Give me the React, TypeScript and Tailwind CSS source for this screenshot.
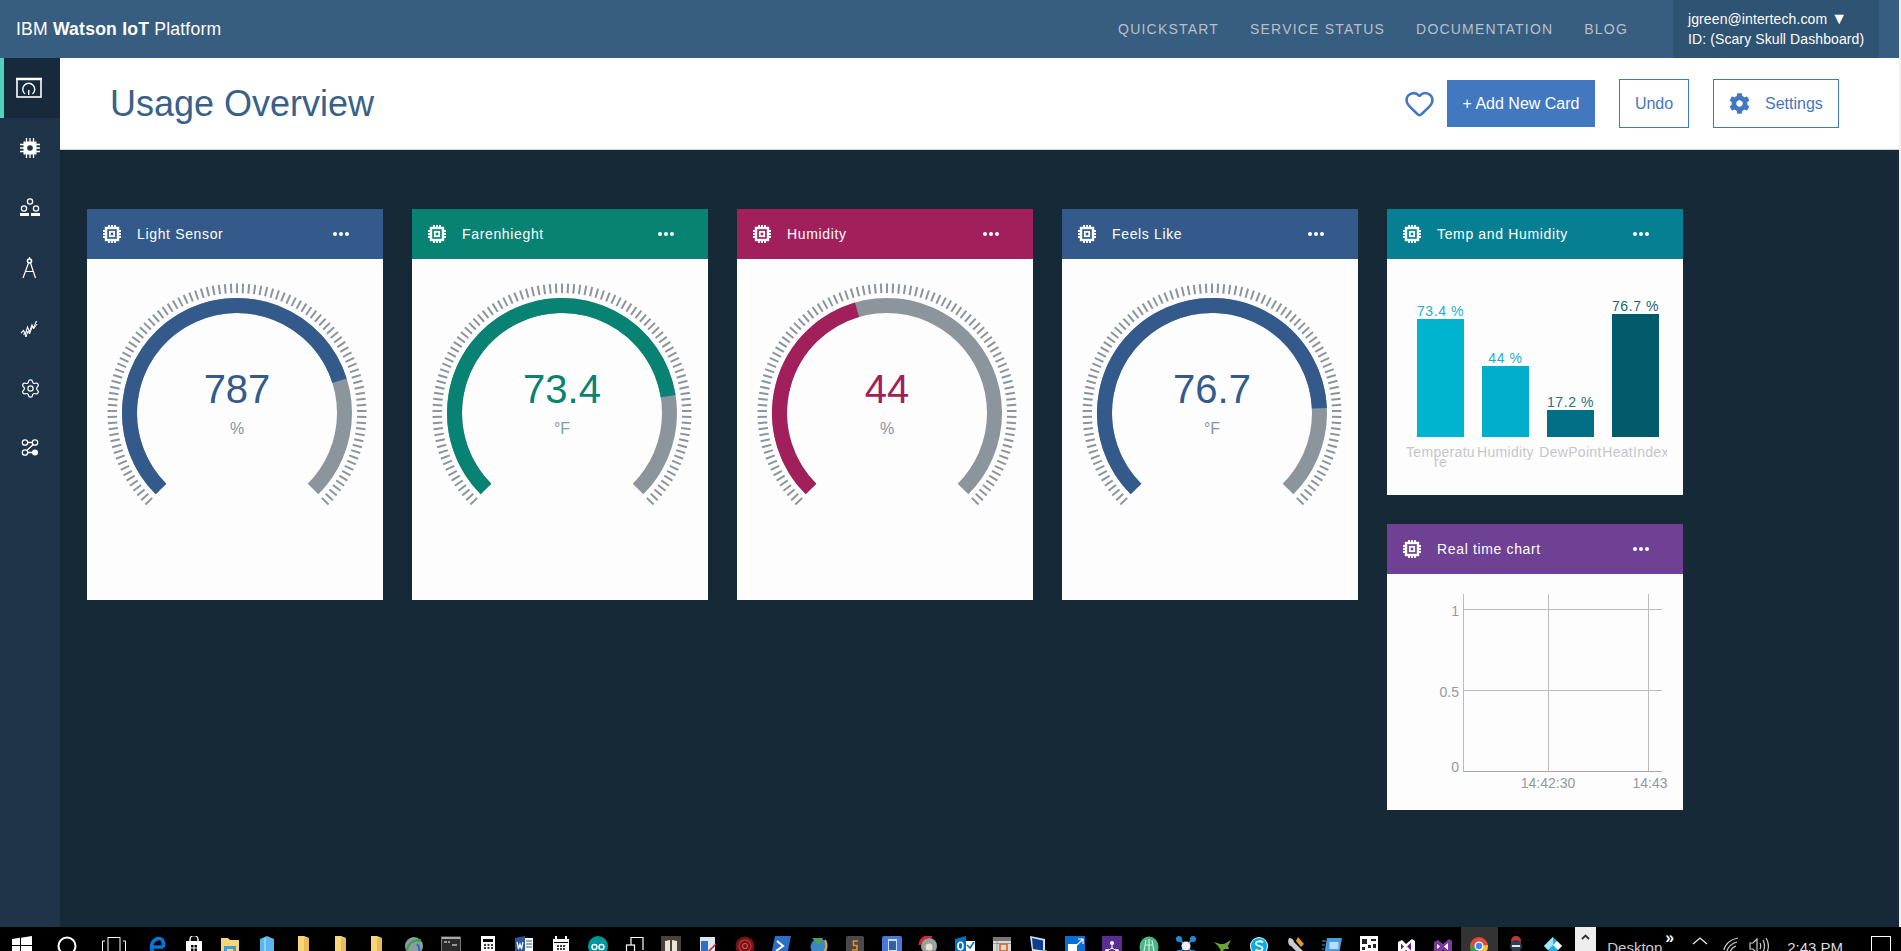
import React from "react";
import { Heart, Settings as Gear } from "lucide-react";
import { FaCog } from "react-icons/fa";

const polar = (cx: number, cy: number, r: number, deg: number) => {
  const a = (deg * Math.PI) / 180;
  return [cx + r * Math.sin(a), cy - r * Math.cos(a)];
};
const arc = (cx: number, cy: number, r: number, a: number, b: number) => {
  const [x1, y1] = polar(cx, cy, r, a);
  const [x2, y2] = polar(cx, cy, r, b);
  return `M${x1} ${y1}A${r} ${r} 0 ${b - a > 180 ? 1 : 0} 1 ${x2} ${y2}`;
};

function Chip() {
  return (
    <svg width="18" height="18" viewBox="0 0 18 18" fill="none" stroke="#fff" className="shrink-0">
      <rect x="3" y="3" width="12" height="12" strokeWidth="2.4" />
      <rect x="6.8" y="6.8" width="4.4" height="4.4" strokeWidth="1.8" />
      <path d="M6 0v2M9 0v2M12 0v2M6 16v2M9 16v2M12 16v2M0 6h2M0 9h2M0 12h2M16 6h2M16 9h2M16 12h2" strokeWidth="1.8" />
    </svg>
  );
}

function Dots() {
  return (
    <div className="ml-auto mr-[34px] flex gap-[1.5px]">
      <span className="h-[4.5px] w-[4.5px] rounded-full bg-white" />
      <span className="h-[4.5px] w-[4.5px] rounded-full bg-white" />
      <span className="h-[4.5px] w-[4.5px] rounded-full bg-white" />
    </div>
  );
}

function CardHead({ title, bg }: { title: string; bg: string }) {
  return (
    <div className={`flex h-[50px] items-center pl-4 text-[14px] tracking-[0.65px] text-white ${bg}`}>
      <Chip />
      <span className="ml-4">{title}</span>
      <Dots />
    </div>
  );
}

function Gauge({ title, bg, color, value, unit, frac, unitColor }: { title: string; bg: string; color: string; value: string; unit: string; frac: number; unitColor: string }) {
  const ticks = Array.from({ length: 101 }, (_, i) => -135 + i * 2.7);
  const cx = 150;
  const cy = 154;
  return (
    <div className="h-[391px] w-[296px] shrink-0 bg-[#fdfdfd]">
      <CardHead title={title} bg={bg} />
      <svg width="296" height="341" viewBox="0 0 296 341" className="block">
        {ticks.map((t) => {
          const [x1, y1] = polar(cx, cy, 120, t);
          const [x2, y2] = polar(cx, cy, 129.5, t);
          return <line key={t} x1={x1} y1={y1} x2={x2} y2={y2} stroke="#8c959c" strokeWidth="2" />;
        })}
        <path d={arc(cx, cy, 107.5, -135, 135)} fill="none" stroke="#8c959c" strokeWidth="15" />
        <path d={arc(cx, cy, 107.5, -135, -135 + 270 * frac)} fill="none" stroke={color} strokeWidth="15" />
        <text x={cx} y="144" textAnchor="middle" fontSize="40" fill={color}>{value}</text>
        <text x={cx} y="175" textAnchor="middle" fontSize="16" fill={unitColor}>{unit}</text>
      </svg>
    </div>
  );
}

function BarChart() {
  const bars = [
    { x: 30, top: 60, w: 47, fill: "#00b4d0", label: "73.4 %", base: 57, tc: "#1cb0cc" },
    { x: 95, top: 107, w: 47, fill: "#00aecb", label: "44 %", base: 104, tc: "#1cb0cc" },
    { x: 160, top: 151, w: 47, fill: "#006f85", label: "17.2 %", base: 148, tc: "#2a7085" },
    { x: 225, top: 55, w: 47, fill: "#005a6a", label: "76.7 %", base: 52, tc: "#1d6478" },
  ];
  return (
    <svg width="296" height="236" viewBox="0 0 296 236" className="block">
      <defs>
        <clipPath id="bc"><rect x="0" y="0" width="280" height="236" /></clipPath>
      </defs>
      {bars.map((b) => (
        <g key={b.label}>
          <rect x={b.x} y={b.top} width={b.w} height={178 - b.top} fill={b.fill} />
          <text x={b.x + 23.5} y={b.base} textAnchor="middle" fontSize="14" letterSpacing="0.6" fill={b.tc}>{b.label}</text>
        </g>
      ))}
      <g fontSize="14" fill="#c6c6c8" textAnchor="middle" clipPath="url(#bc)" letterSpacing="0.3">
        <text x="53.5" y="198">Temperatu</text>
        <text x="53.5" y="208">re</text>
        <text x="118.5" y="198">Humidity</text>
        <text x="183.5" y="198">DewPoint</text>
        <text x="248.5" y="198">HeatIndex</text>
      </g>
    </svg>
  );
}

function LineChart() {
  return (
    <svg width="296" height="236" viewBox="0 0 296 236" className="block">
      <g stroke="#b9bdc0" strokeWidth="1">
        <path d="M76.5 20V197M161.5 20V197M261.5 20V197M76 35.5H275M76 116.5H275" fill="none" />
        <path d="M76 197.5H275" stroke="#a3a7aa" />
      </g>
      <g fontSize="14" fill="#92999f">
        <text x="72" y="42" textAnchor="end">1</text>
        <text x="72" y="123" textAnchor="end">0.5</text>
        <text x="72" y="198" textAnchor="end">0</text>
        <text x="161" y="214" textAnchor="middle">14:42:30</text>
        <text x="263" y="214" textAnchor="middle">14:43</text>
      </g>
    </svg>
  );
}

function SideIcon({ i }: { i: number }) {
  const s = { width: 30, height: 30, viewBox: "0 0 30 30", fill: "none", stroke: "#fff" } as const;
  if (i === 0)
    return (
      <svg {...s} className="-ml-[2px]">
        <rect x="1" y="6" width="24" height="18" strokeWidth="1.6" />
        <path d="M0 6h26" strokeWidth="2.5" />
        <path d="M9 21a6 6 0 1 1 7.500 0M12.700 17v5" strokeWidth="1.4" />
      </svg>
    );
  if (i === 1)
    return (
      <svg {...s}>
        <path d="M11.500 5v20M15 5v20M18.500 5v20M5 11.500h20M5 15h20M5 18.500h20" strokeWidth="1.300" />
        <rect x="8.500" y="8.500" width="13" height="13" fill="#fff" stroke="none" />
        <circle cx="15" cy="15" r="2.800" fill="#1f3449" stroke="none" />
      </svg>
    );
  if (i === 2)
    return (
      <svg {...s}>
        <circle cx="15" cy="8.500" r="2.600" strokeWidth="1.300" />
        <circle cx="9" cy="15.500" r="2.600" strokeWidth="1.300" />
        <circle cx="21" cy="15.500" r="2.600" strokeWidth="1.300" />
        <rect x="5" y="20" width="9" height="3" fill="#fff" stroke="none" />
        <rect x="16" y="20" width="9" height="3" fill="#fff" stroke="none" />
      </svg>
    );
  if (i === 3)
    return (
      <svg {...s}>
        <path d="M14.500 4v2" strokeWidth="1.200" />
        <circle cx="14.500" cy="8" r="2" strokeWidth="1.600" />
        <path d="M13.500 10 8 25M15.500 10 20.500 25M10.500 18.500h8" strokeWidth="1.200" />
      </svg>
    );
  if (i === 4)
    return (
      <svg {...s}>
        <path d="M6 20l2.500-2.500 2 3.500 2-7 2 5 2.500-7 1.500 3 3-7" strokeWidth="1.100" />
        <path d="M8 21.500l1.500-1 1.500 3.500 2-6 1.500 3 3-8 1 3 3.500-5" strokeWidth="1" />
      </svg>
    );
  if (i === 5)
    return (
      <div className="flex h-[30px] w-[30px] items-center justify-center">
        <Gear size={21} color="#fff" strokeWidth={1.4} />
      </div>
    );
  return (
    <svg {...s}>
      <circle cx="10" cy="9.500" r="2.700" strokeWidth="1.300" />
      <circle cx="20" cy="9.500" r="2.700" strokeWidth="1.300" />
      <circle cx="10" cy="19.500" r="2.700" strokeWidth="1.300" />
      <circle cx="20" cy="19.500" r="3" fill="#fff" stroke="none" />
      <path d="M12.700 9.500h4.600M12.700 19.500h5M11.800 17.500l6.500-6" strokeWidth="1.300" />
    </svg>
  );
}

const Ico = ({ children, w = 20 }: { children: React.ReactNode; w?: number }) => (
  <svg width={w} height="20" viewBox={`0 0 ${w} 20`} className="shrink-0">{children}</svg>
);

const trayIcons: React.ReactNode[] = [
  <Ico key="edge"><path d="M16.500 11H4.500M4.500 11C4.500 5 9 2.500 12 2.500c3 0 5 2.500 4.500 8.500M4.500 11c0 5 3.500 7.500 8 7.500" fill="none" stroke="#0078d7" strokeWidth="3.600" /></Ico>,
  <Ico key="store"><path d="M6 5V3.500a4 4 0 0 1 8 0V5" fill="none" stroke="#fff" strokeWidth="1.400" /><rect x="2" y="5" width="16" height="15" fill="#fff" /><rect x="7" y="9" width="6" height="6" fill="#000" /><path d="M10 9v6M7 12h6" stroke="#fff" /></Ico>,
  <Ico key="fold"><path d="M1 2h7l2 2h9v16H1z" fill="#f6d777" /><rect x="4" y="10" width="12" height="9" fill="#3aa0dc" /><rect x="7" y="13" width="6" height="5" fill="#f6d777" /></Ico>,
  <Ico key="blue"><path d="M3 3 10 0l7 3v17H3z" fill="#5db7ef" /><path d="M8 2v18" stroke="#8fd0f5" strokeWidth="2" /></Ico>,
  <Ico key="y1"><path d="M4 0h6l5 2v18H4z" fill="#f7d67a" /><path d="M10 2v18h5V2z" fill="#e9bd55" /></Ico>,
  <Ico key="y2"><path d="M4 0h6l5 2v18H4z" fill="#f7d67a" /><path d="M10 2v18h5V2z" fill="#e9bd55" /></Ico>,
  <Ico key="y3"><path d="M4 0h6l5 2v18H4z" fill="#f7d67a" /><path d="M10 2v18h5V2z" fill="#e9bd55" /></Ico>,
  <Ico key="globe"><circle cx="10" cy="10" r="9" fill="#8d9ba3" /><path d="M3 14C5 6 11 3 17 5" fill="none" stroke="#3fa34d" strokeWidth="2.500" /><path d="M13 8c3 3 3 7 0 10" fill="none" stroke="#2b6cb0" strokeWidth="2" /></Ico>,
  <Ico key="term"><rect x="0.500" y="1" width="19" height="19" fill="#2b2b2b" stroke="#777" /><rect x="1" y="1" width="18" height="2" fill="#aaa" /><path d="M3 6h3M7 6h2M11 9h5" stroke="#bbb" strokeWidth="1.400" /></Ico>,
  <Ico key="calc"><rect x="3" y="0" width="14" height="20" fill="#fff" /><rect x="5" y="3" width="10" height="3" fill="#000" /><path d="M6 9h2M9.500 9h2M13 9h2M6 12h2M9.500 12h2M13 12h2" stroke="#000" strokeWidth="1.500" /></Ico>,
  <Ico key="word"><path d="M11 0 1 2v16l10 2z" fill="#2b579a" /><rect x="11" y="2" width="8" height="17" fill="#fff" /><path d="M12 5h6M12 8h6M12 11h6" stroke="#2b579a" /><path d="M3 6l1.500 7 1.500-5 1.500 5L9 6" fill="none" stroke="#fff" strokeWidth="1.200" /></Ico>,
  <Ico key="cal"><rect x="2" y="3" width="16" height="17" fill="#fff" /><rect x="4" y="0" width="2" height="5" fill="#fff" /><rect x="14" y="0" width="2" height="5" fill="#fff" /><rect x="3" y="6" width="14" height="1" fill="#000" /><path d="M6 10h2M9 10h2M12 10h2M6 13h2M9 13h2M12 13h2" stroke="#000" strokeWidth="1.500" /></Ico>,
  <Ico key="ard"><circle cx="10" cy="10" r="10" fill="#00979c" /><circle cx="6.500" cy="11" r="2.500" fill="none" stroke="#fff" strokeWidth="1.400" /><circle cx="13.500" cy="11" r="2.500" fill="none" stroke="#fff" strokeWidth="1.400" /></Ico>,
  <Ico key="dev"><path d="M6 9V1.500h12V14" fill="none" stroke="#fff" strokeWidth="1.200" /><rect x="1.500" y="9" width="8" height="10" fill="none" stroke="#fff" strokeWidth="1.200" /></Ico>,
  <Ico key="book"><rect x="0" y="0" width="20" height="20" fill="#4a4238" /><path d="M4 5l5-1v14H4zM11 4l5 1v13h-5z" fill="#e8e4dc" /></Ico>,
  <Ico key="win"><rect x="2" y="1" width="15" height="19" fill="#dfe6f0" /><rect x="3" y="5" width="7" height="12" fill="#2f6fc4" /><path d="M8 18 18 8" stroke="#d3232a" strokeWidth="1.600" /></Ico>,
  <Ico key="spiral"><circle cx="10" cy="10" r="9.500" fill="#6e1518" /><circle cx="10" cy="10" r="6" fill="none" stroke="#c12d33" strokeWidth="1.500" /><circle cx="10" cy="10" r="2.500" fill="none" stroke="#e04d4d" strokeWidth="1.200" /></Ico>,
  <Ico key="ps"><path d="M4 0h16l-4 20H0z" fill="#2b6fc4" /><path d="M6 5l6 5-7 5" fill="none" stroke="#fff" strokeWidth="2" /></Ico>,
  <Ico key="mg"><circle cx="11" cy="11" r="8.500" fill="#3b86c8" /><path d="M4 2l7 7 4-7z" fill="#48a548" /><path d="M17 4c2 4 2 9-2 13" fill="none" stroke="#efa42b" strokeWidth="2" /></Ico>,
  <Ico key="subl"><rect x="1" y="0" width="18" height="20" rx="2" fill="#4a4a4a" /><rect x="1" y="17" width="18" height="3" fill="#ddd" /><path d="M13 5H8.500v4.500H12V14H7" fill="none" stroke="#e8902e" strokeWidth="1.600" /></Ico>,
  <Ico key="dev2"><rect x="0" y="0" width="20" height="20" rx="2" fill="#4a78d8" /><rect x="6" y="3" width="9" height="14" fill="#c8daf4" /><rect x="7" y="5" width="7" height="9" fill="#33619f" /></Ico>,
  <Ico key="rec"><circle cx="11" cy="10" r="8" fill="#9a9f9f" /><path d="M2 9a9 9 0 0 1 12-8" fill="none" stroke="#d62828" strokeWidth="3" /><circle cx="11" cy="11" r="3.500" fill="#e8e2cc" /></Ico>,
  <Ico key="ol"><path d="M0 3 11 0v20L0 17z" fill="#0072c6" /><rect x="11" y="5" width="9" height="15" fill="#fff" /><path d="M12 9l3 3 4-6" fill="none" stroke="#0072c6" strokeWidth="1.500" /><ellipse cx="5.500" cy="10" rx="2.500" ry="3.700" fill="none" stroke="#fff" strokeWidth="1.600" /></Ico>,
  <Ico key="cal2"><rect x="1" y="1" width="18" height="19" fill="#d9d9d9" /><rect x="1" y="1" width="18" height="4" fill="#777" /><rect x="8" y="8" width="7" height="7" fill="none" stroke="#d9640d" strokeWidth="1.600" /><path d="M1 7.500h18M5 5v15" stroke="#8a8a8a" strokeWidth=".8" /></Ico>,
  <Ico key="mon"><path d="M1 0l15 3v14L3 15z" fill="#d9e2ee" /><path d="M3 2l11 2.500v10L4 13z" fill="#0b3d91" /><circle cx="16" cy="17" r="3" fill="#7dbb5a" /></Ico>,
  <Ico key="sq"><rect x="0" y="0" width="20" height="20" fill="#0a6fd0" /><rect x="3" y="8" width="9" height="12" fill="#fff" /><path d="M13 3h5v5M12 9l6-6" stroke="#fff" fill="none" strokeWidth="1.200" /></Ico>,
  <Ico key="vsp"><rect x="0" y="0" width="20" height="20" fill="#5c2d91" /><circle cx="10" cy="7" r="2" fill="#fff" /><circle cx="5" cy="15" r="2" fill="#fff" /><circle cx="15" cy="15" r="2" fill="#fff" /><path d="M10 7v6M5 15l5-3 5 3" stroke="#fff" fill="none" /></Ico>,
  <Ico key="grn"><ellipse cx="10" cy="11" rx="9.500" ry="10.500" fill="#4bb58a" /><path d="M7 4c-1 5-1 10-3 13M13 4c1 5 1 10 3 13M10 3v15M7 9h6" stroke="#d8f2e4" fill="none" strokeWidth="1.100" /></Ico>,
  <Ico key="skull"><path d="M3 3l14 14M17 3 3 17" stroke="#1b8fd6" strokeWidth="2" /><circle cx="3" cy="3" r="3" fill="#1b8fd6" /><circle cx="17" cy="3" r="3" fill="#1b8fd6" /><circle cx="3" cy="17" r="3" fill="#1b8fd6" /><circle cx="17" cy="17" r="3" fill="#1b8fd6" /><circle cx="10" cy="10" r="4.500" fill="#eee" /></Ico>,
  <Ico key="gecko"><path d="M2 6l6 2 4 0 7-4-3 6 1 3-5 0-2 5-2-5-2-3z" fill="#6aa52f" /></Ico>,
  <Ico key="skype"><circle cx="10" cy="10" r="9" fill="#fff" /><circle cx="10" cy="10" r="8" fill="#00aff0" /><path d="M14 6.500C12 4.500 6.500 5 7 8c.5 2.500 6.500 1.500 6.500 4.500 0 3-5 3-7 1" fill="none" stroke="#fff" strokeWidth="1.800" /></Ico>,
  <Ico key="wrench"><path d="M3 2c3 0 5 2 5 4l9 9-3 4-9-9C3 10 1 6 3 2z" fill="#c7ccd2" /><path d="M12 1l6 7-3 3-5-6z" fill="#e89a2a" /></Ico>,
  <Ico key="para"><path d="M5 2h15l-3 17H2z" fill="#4d9ad9" /><rect x="7.500" y="6" width="9" height="7" fill="#b7dcf5" /><path d="M0 5h4M0 9h3M0 13h2" stroke="#4d9ad9" /></Ico>,
  <Ico key="qr"><rect x="1" y="0" width="18" height="20" fill="#fff" /><path d="M3 3h5v5H3zM12 3h5v2h-5zM3 11h3v3H3zM9 9h3v3H9zM14 8h3v4h-3zM9 15h8v2H9z" fill="#222" /></Ico>,
  <Ico key="vs1"><path d="M2 6l4-2 4 4 6-5 3 2v12l-3 2-6-5-4 4-4-2z" fill="#fff" /><path d="M5 7.500v6l3-3zM15 6.500l-4 4 4 4z" fill="#68217a" /></Ico>,
  <Ico key="vs2"><path d="M1 6l4-2 5 4 6-5 3 2v12l-3 2-6-5-5 4-4-2z" fill="#7a3a9a" /><path d="M4 8v5l3-2.500zM15 7l-4 3.500 4 3.500z" fill="#fff" /></Ico>,
  <Ico key="chrome"><circle cx="10" cy="10" r="9" fill="#dd4b3e" /><path d="M10 10 1 10a9 9 0 0 0 6 8.500z" fill="#30a14e" /><path d="M10 10l9-1a9 9 0 0 1-9 10z" fill="#f7c32e" /><circle cx="10" cy="10" r="4.500" fill="#fff" /><circle cx="10" cy="10" r="3.200" fill="#4586f4" /></Ico>,
  <Ico key="char"><circle cx="10" cy="5" r="5" fill="#d03030" /><circle cx="10" cy="10" r="6" fill="#2c3e50" /><path d="M6 10h8" stroke="#e8e8e8" strokeWidth="2" /><path d="M3 18h14v2H3z" fill="#e2b92c" /></Ico>,
  <Ico key="kodi"><path d="M10 1l9 9-9 9-9-9z" fill="#17b2e7" /><path d="M10 1v8l-5 5-4-4z" fill="#a9e3f7" /><path d="M10 9l4-4 5 5-4 4z" fill="#fff" /></Ico>,
];

function Taskbar() {
  return (
    <div className="flex h-6 shrink-0 overflow-hidden bg-black">
      <div className="flex w-[44px] justify-center pt-[9px]">
        <svg width="20" height="20" viewBox="0 0 20 20" fill="#fff" className="shrink-0"><path d="M0 3l8-1.200V9H0zM9 1.700 20 0v9H9zM0 10h8v7.500L0 16zM9 10h11v10L9 18z" /></svg>
      </div>
      <div className="flex w-[45px] justify-center pt-[9px]">
        <svg width="20" height="20" viewBox="0 0 20 20" className="shrink-0"><circle cx="10" cy="10" r="8.500" fill="none" stroke="#fff" strokeWidth="2" /></svg>
      </div>
      <div className="flex w-[49.6px] justify-center pt-[9px]">
        <svg width="24" height="20" viewBox="0 0 24 20" fill="none" stroke="#fff" className="shrink-0"><rect x="6" y="1.500" width="12" height="18" /><path d="M3 5H.5v15M21 5h2.500v15" /></svg>
      </div>
      {trayIcons.map((ic, i) => (
        <div key={i} className={`flex w-[36.74px] shrink-0 justify-center pt-[9px] ${i === 36 ? "bg-[#333333]" : ""}`}>{ic}</div>
      ))}
      <div className="ml-[4px] flex h-6 w-[21px] shrink-0 justify-center bg-[#eeeeee] pt-[7px]">
        <svg width="9" height="6" viewBox="0 0 9 6" fill="none" stroke="#333" strokeWidth="1.800"><path d="M1 5l3.500-3.500L8 5" /></svg>
      </div>
      <span className="ml-[11px] mt-[9px] text-[15px] leading-6 text-[#cccccc]">Desktop</span>
      <span className="ml-[3px] -mt-[1px] text-[16px] font-bold leading-6 text-white">»</span>
      <svg width="16" height="20" viewBox="0 0 16 20" fill="none" stroke="#eee" strokeWidth="1.300" className="ml-[18px] mt-[9px] shrink-0"><path d="M1 8l7-6 7 6" /></svg>
      <svg width="16" height="20" viewBox="0 0 16 20" fill="none" stroke="#ccc" strokeWidth="1.200" className="ml-[15px] mt-[9px] shrink-0"><path d="M1 14C2 8 8 3 15 2M4 15c1-4 5-8 10-9M7 16c1-3 3-5 6-6" /></svg>
      <svg width="20" height="20" viewBox="0 0 20 20" fill="none" stroke="#ccc" strokeWidth="1.200" className="ml-[10px] mt-[9px] shrink-0"><path d="M1 7h3l4-4v14l-4-4H1zM11 7c1 2 1 4 0 6M14 4c2 4 2 8 0 12M17 2c3 5 3 11 0 16" /></svg>
      <span className="ml-[18px] mt-[9px] text-[15px] leading-6 text-[#dddddd]">2:43 PM</span>
      <div className="ml-[28px] mt-[9px] h-6 w-[20px] shrink-0 border border-white" />
    </div>
  );
}

export default function App() {
  const nav = ["QUICKSTART", "SERVICE STATUS", "DOCUMENTATION", "BLOG"];
  return (
    <div className="flex h-[951px] w-[1901px] flex-col overflow-hidden bg-[#f1f1f1] font-['Liberation_Sans',Arial,sans-serif]">
      <div className="flex min-h-0 w-[1899px] flex-1 flex-col">
        <div className="flex h-[58px] shrink-0 items-center bg-[#375d80] pl-4 text-white">
          <span className="text-[17.6px] tracking-[0.2px]">IBM <b>Watson IoT</b> Platform</span>
          <div className="ml-auto flex gap-[31px] text-[14px] tracking-[1.2px] text-[#b9c1c7]">
            {nav.map((n) => <span key={n}>{n}</span>)}
          </div>
          <div className="ml-[45px] mr-[20px] flex h-full w-[206px] flex-col justify-center gap-[4px] bg-[#2f5372] pl-[15px] text-[14px] leading-4 tracking-[0.1px] text-white">
            <span>jgreen@intertech.com <span className="text-[16px] leading-4">▼</span></span>
            <span>ID: (Scary Skull Dashboard)</span>
          </div>
        </div>
        <div className="flex min-h-0 flex-1">
          <div className="flex w-[60px] shrink-0 flex-col bg-[#1f3449]">
            {[0, 1, 2, 3, 4, 5, 6].map((i) => (
              <div key={i} className={`flex h-[60px] items-center justify-center ${i === 0 ? "border-l-4 border-[#4fd1bf] bg-[#172a3b]" : ""}`}>
                <SideIcon i={i} />
              </div>
            ))}
          </div>
          <div className="flex min-w-0 flex-1 flex-col bg-[#162936]">
            <div className="flex h-[92px] shrink-0 items-center border-b border-[#cfd3d6] bg-white pl-[50px] text-[16px]">
              <h1 className="text-[36px] text-[#38618a]">Usage Overview</h1>
              <Heart size={31} color="#4278bf" strokeWidth={2} className="ml-auto" />
              <button className="ml-[12px] h-[47px] w-[148px] bg-[#4278bf] text-white">+ Add New Card</button>
              <button className="ml-[24px] h-[49px] w-[70px] border border-[#4278bf] bg-white text-[#4278bf]">Undo</button>
              <button className="ml-[24px] mr-[60px] flex h-[49px] w-[126px] items-center border border-[#4278bf] bg-white pl-[15px] text-[#4278bf]">
                <FaCog size={21} />
                <span className="ml-[15px]">Settings</span>
              </button>
            </div>
            <div className="flex items-start gap-[29px] pl-[27px] pt-[59px]">
              <Gauge title="Light Sensor" bg="bg-[#335a8b]" color="#335a8b" value="787" unit="%" frac={0.7686} unitColor="#7e95ad" />
              <Gauge title="Farenhieght" bg="bg-[#088272]" color="#088272" value="73.4" unit="°F" frac={0.8} unitColor="#7aa0a8" />
              <Gauge title="Humidity" bg="bg-[#a1205c]" color="#a1205c" value="44" unit="%" frac={0.44} unitColor="#8c8f9c" />
              <Gauge title="Feels Like" bg="bg-[#335a8b]" color="#335a8b" value="76.7" unit="°F" frac={0.824} unitColor="#7e95ad" />
              <div className="flex w-[296px] flex-col gap-[29px]">
                <div className="bg-[#fdfdfd]">
                  <CardHead title="Temp and Humidity" bg="bg-[#067f93]" />
                  <BarChart />
                </div>
                <div className="bg-[#fdfdfd]">
                  <CardHead title="Real time chart" bg="bg-[#6f4195]" />
                  <LineChart />
                </div>
              </div>
            </div>
          </div>
        </div>
      </div>
      <Taskbar />
    </div>
  );
}
